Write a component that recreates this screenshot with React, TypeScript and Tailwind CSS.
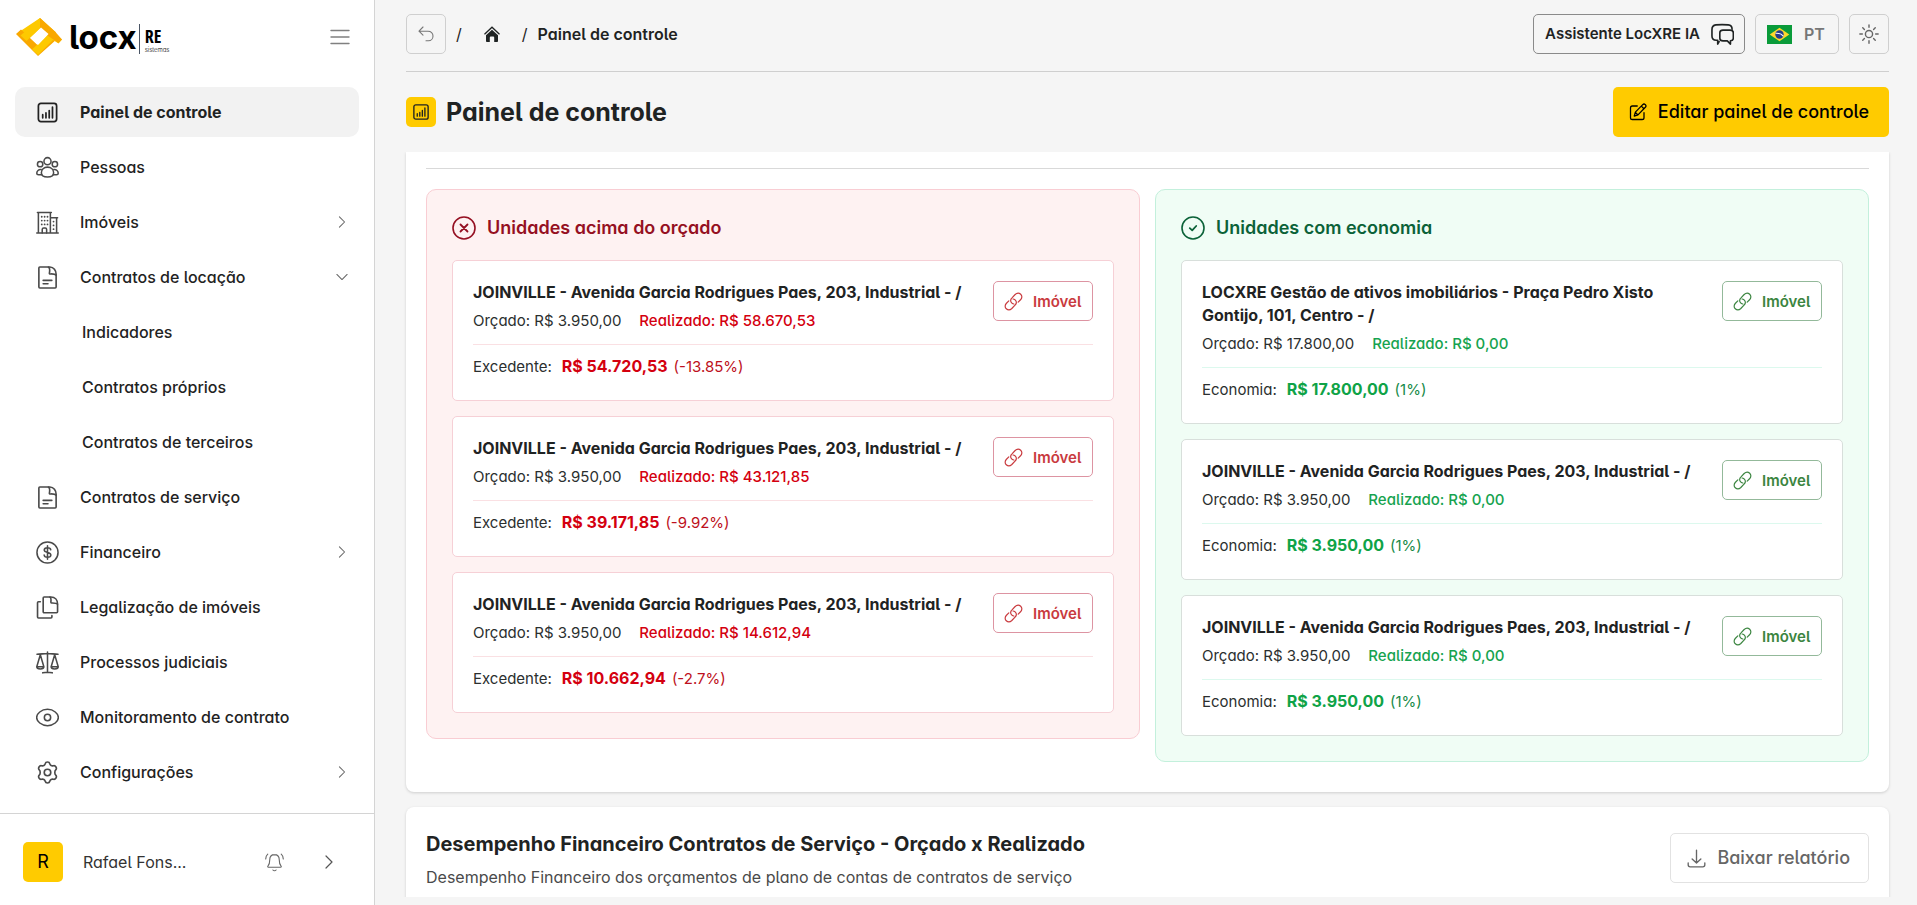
import type { ReactNode } from "react";

type IconProps = { className?: string };

function Svg({ className = "", box = 24, width = 1.6, children }: IconProps & { box?: number; width?: number; children: ReactNode }) {
  return (
    <svg
      aria-hidden="true"
      className={`shrink-0 ${className}`}
      viewBox={`0 0 ${box} ${box}`}
      fill="none"
      stroke="currentColor"
      strokeWidth={width}
      strokeLinecap="round"
      strokeLinejoin="round"
    >
      {children}
    </svg>
  );
}

const ChartIcon = ({ className }: IconProps) => (
  <Svg className={className} width={1.8}>
    <rect x="2.5" y="2.5" width="19" height="19" rx="2.6" />
    <path d="M7 17.5v-3.2M10.4 17.5v-5M13.8 17.5V10M17.2 17.5V6.5" />
  </Svg>
);

const PeopleIcon = ({ className }: IconProps) => (
  <Svg className={className} width={1.6}>
    <circle cx="12" cy="5.4" r="3.7" />
    <circle cx="4.3" cy="8.5" r="2.8" />
    <circle cx="19.7" cy="8.5" r="2.8" />
    <path d="M12 11.6c-3.8 0-6.4 2.6-6.4 5.9 0 3.2 2.9 4.5 6.4 4.5s6.4-1.3 6.4-4.5c0-3.3-2.6-5.900-6.400-5.900z" />
    <path d="M5.4 14.2c-2.700-.3-4.600 1.500-4.600 3.700 0 1.100.8 1.600 1.800 1.600h3.300M18.600 14.200c2.700-.3 4.600 1.500 4.600 3.700 0 1.100-.8 1.600-1.800 1.600h-3.300" />
  </Svg>
);

const BuildingIcon = ({ className }: IconProps) => (
  <Svg className={className} width={1.6}>
    <path d="M.8 23h22.4M2.5 23V1.5M15 1.5V23M1.5 1.5h14.500M15 7h7.500M21.500 7v16" />
    <path d="M6.5 23v-3.800c0-.9.600-1.500 1.500-1.500h1.600c.9 0 1.500.6 1.500 1.500V23" />
    <path d="M6 6h.01M9 6h.01M12 6h.01M6 10h.01M9 10h.01M12 10h.01M6 14h.01M9 14h.01M12 14h.01M18.300 11h.01M18.300 15h.01M18.300 19h.01" strokeWidth="1.9" />
  </Svg>
);

const FileIcon = ({ className }: IconProps) => (
  <Svg className={className} width={1.7}>
    <path d="M4 1h10.500c4 0 6.500 4 6.500 7.500V22c0 .6-.4 1-1 1H4c-.6 0-1-.4-1-1V2c0-.6.4-1 1-1z" />
    <path d="M13 1.200c1.600.8 1.300 4.500 1 6.200-.1.500.2.900.7.900 2 0 5-.3 6 1.200" />
    <path d="M7.500 15h9M7.500 18.500h5" />
  </Svg>
);

const CoinIcon = ({ className }: IconProps) => (
  <Svg className={className} width={1.6}>
    <circle cx="12" cy="12" r="11" />
    <path d="M15.400 9.200C15.200 7.800 13.900 7 12 7c-2 0-3.400.9-3.400 2.400 0 3.400 6.900 1.700 6.900 5.200 0 1.500-1.500 2.400-3.500 2.400s-3.400-.9-3.500-2.400M12 5v14" />
  </Svg>
);

const CopyIcon = ({ className }: IconProps) => (
  <Svg className={className} width={1.7}>
    <path d="M8.500 1h7c4.500 0 7 3.500 7 7.500v8c0 .6-.4 1-1 1h-13c-.6 0-1-.4-1-1V2c0-.6.4-1 1-1z" />
    <path d="M14.500 1.200c1.500.8 1.200 3.800 1 5.300-.1.500.2.800.7.800 2 0 5.300-.2 6.200 1.200" />
    <path d="M4.500 6H2.600c-.6 0-1 .4-1 1v15c0 .6.4 1 1 1h13c.6 0 1-.4 1-1v-1.500" />
  </Svg>
);

const ScaleIcon = ({ className }: IconProps) => (
  <Svg className={className} width={1.6}>
    <path d="M1 3.300c3.500 0 7.500-.6 11-.6s7.500.6 11 .6M12 1v21.500M7 22.800c3-.7 7-.7 10 0" />
    <path d="M4.500 4l-3.700 12.500M4.500 4l3.700 12.500M.8 16.500c0 2.900 7.400 2.900 7.400 0zM19.500 4l-3.700 12.500M19.500 4l3.700 12.500M15.800 16.500c0 2.900 7.400 2.900 7.400 0z" />
  </Svg>
);

const EyeIcon = ({ className }: IconProps) => (
  <Svg className={className} width={1.6}>
    <path d="M12 3.500c6.500 0 11.300 4.500 11.300 8.500S18.500 20.500 12 20.500.7 16 .7 12 5.500 3.500 12 3.500z" />
    <circle cx="12" cy="12" r="3.3" />
  </Svg>
);

const GearIcon = ({ className }: IconProps) => (
  <Svg className={className} width={1.7}>
    <path d="M9.600 2.900c.5-2.400 4.300-2.400 4.800 0 .4 1.700 2 2.600 3.700 2.100 2.300-.7 4.200 2.600 2.500 4.200-1.300 1.200-1.300 4.400 0 5.600 1.700 1.600-.2 4.900-2.500 4.200-1.700-.5-3.300.4-3.700 2.100-.5 2.400-4.300 2.400-4.800 0-.4-1.700-2-2.600-3.700-2.100-2.300.7-4.200-2.600-2.500-4.200 1.300-1.200 1.300-4.400 0-5.600C1.700 7.600 3.600 4.300 5.900 5c1.700.5 3.300-.4 3.700-2.100z" />
    <circle cx="12" cy="12" r="3.4" />
  </Svg>
);

const Chevron = ({ className, down = false }: IconProps & { down?: boolean }) => (
  <Svg className={className} box={14} width={1.2}>
    <path d={down ? "M1 4l6 6 6-6" : "M4 1l6 6-6 6"} />
  </Svg>
);

const LinkIcon = ({ className }: IconProps) => (
  <Svg className={className} width={1.5}>
    <path d="M12.500 15.200c-3-.3-5-3.500-3.600-6.200.3-.6.700-1.100 1.200-1.600l4-4.200c2.200-2.200 5-2.300 7-.4s1.900 4.900-.2 7l-3 3" />
    <path d="M11.500 8.800c3 .3 5 3.500 3.600 6.200-.3.6-.7 1.100-1.200 1.600l-4 4.200c-2.200 2.200-5 2.300-7 .4s-1.900-4.900.2-7l3-3" />
  </Svg>
);

const PencilIcon = ({ className }: IconProps) => (
  <Svg className={className} width={1.7}>
    <path d="M11 4H4.500C2.800 4 2 4.800 2 6.500v13C2 21.200 2.800 22 4.500 22h13c1.700 0 2.500-.8 2.500-2.500V13" />
    <path d="M18.300 2.200c1-1 2.500-.9 3.500 0 1 1 .9 2.500 0 3.500L12 15.800l-5 1.600 1.500-5.200zM16.500 4.200l3.400 3.400M8.500 12.500l3.200 3.200" />
  </Svg>
);

const ChatIcon = ({ className }: IconProps) => (
  <Svg className={className} width={1.7}>
    <path d="M8.500 19.500L7 22v-4H5.500c-2.700 0-4.500-1.500-4.500-4.500V7c0-3.500 1.300-4.700 4-5 4-.4 9-.4 13 0 2.700.3 4 1.500 4 4.500" />
    <path d="M12.500 7.500h7.500c2 0 3.300.6 3.300 2.700v5.600c0 2-1 2.700-3 2.700v3.500l-3.300-3.300h-4.500c-2.300 0-3.300-.7-3.300-2.700v-5.800c0-2.100 1.300-2.700 3.300-2.700z" />
  </Svg>
);

const SunIcon = ({ className }: IconProps) => (
  <Svg className={className} width={1.7}>
    <circle cx="12" cy="12" r="4.3" />
    <path d="M12 1v3M12 20v3M1 12h3M20 12h3M4.500 4.500l2 2M17.500 17.500l2 2M19.500 4.500l-2 2M6.500 17.500l-2 2" />
  </Svg>
);

const DownloadIcon = ({ className }: IconProps) => (
  <Svg className={className} width={1.7}>
    <path d="M12 1.500v16M6.500 12.500l5.500 5.300 5.500-5.300M1.500 17.500v2.500c0 1.600.9 2.500 2.500 2.500h16c1.600 0 2.500-.9 2.500-2.500v-2.500" />
  </Svg>
);

const BellIcon = ({ className }: IconProps) => (
  <Svg className={className} width={1.4}>
    <path d="M12 2c-3.800 0-6 2.800-6 6.500 0 4-.8 6.500-2.300 8-.6.700-.3 1.500.6 1.500h15.400c.9 0 1.200-.8.6-1.500-1.500-1.500-2.300-4-2.300-8C18 4.800 15.800 2 12 2zM10 21.500c1 1.300 3 1.300 4 0M3.500 1.500C1.800 3 1 5 .9 7.500M20.500 1.500c1.700 1.500 2.500 3.500 2.600 6" />
  </Svg>
);

const UndoIcon = ({ className }: IconProps) => (
  <Svg className={className} box={16} width={1.1}>
    <path d="M5 1L1 5.200l4 4M1 5.200h9c3 0 5 2 5 4.700S13 14.800 10.500 14.800H8" />
  </Svg>
);

const HomeIcon = ({ className }: IconProps) => (
  <svg aria-hidden="true" viewBox="0 0 16 16" className={className} fill="currentColor">
    <path d="M8 3.700L2 9.300V15c0 .5.300.9.800.9h3V11.500c0-.5.4-.9.900-.9h2.600c.5 0 .9.400.9.900v4.400h3c.5 0 .8-.4.800-.9V9.300z" />
    <path d="M.8 7.900L8 1.200l7.200 6.700" fill="none" stroke="currentColor" strokeWidth="1.3" strokeLinecap="round" />
  </svg>
);

const BrazilFlag = ({ className }: IconProps) => (
  <svg aria-hidden="true" viewBox="0 0 25 19" className={className}>
    <path fill="#0a9b3a" d="M0 0h25v19H0z" />
    <path fill="#fdd72b" d="M12.500 2.700L22.300 9.500l-9.800 6.800L2.700 9.500z" />
    <circle cx="12.5" cy="9.5" r="4.2" fill="#263c8c" />
    <path d="M8.600 8.300c3-.3 5.900.6 7.700 2.900" fill="none" stroke="#fff" strokeWidth="1.1" />
  </svg>
);

function Logo() {
  return (
    <a href="#inicio" aria-label="locx RE sistemas" className="flex items-center text-black">
      <svg aria-hidden="true" viewBox="0 0 46 38" className="h-[38px] w-[46px]">
        <path fill="#fdc900" d="M24 0L40 14.500 34 20 24 10.500 11 22.500 3 14z" />
        <path fill="#f9a800" d="M24 0l10 9-4 7.500-6-6zM0 16l5-4.500 17 16 13-12 6 5.500L22 38z" />
        <path fill="#fdc900" d="M24 0L4.500 17.500l6 5.500L24 10.500zM35 13.500l11 8-3.500 4-5.500-3.500-15 15-6-5.500z" />
        <path fill="#f9a800" d="M34 9l5 4.500 7 8-3.500 3.500L30 16.500z" />
        <path fill="#fff" d="M25 9.500l7.500 6.500L22 27l-7.500-7z" />
      </svg>
      <span className="ml-[7px] text-[33px] leading-[38px] font-bold">locx</span>
      <span className="mt-1 ml-[2px] flex h-[30px] flex-col border-l border-gray-600 pt-[3px] pl-[5px]">
        <span className="font-['Open_Sans_Condensed','Roboto_Condensed','Noto_Sans_Condensed','Liberation_Sans_Narrow','Roboto',sans-serif] text-[18px] leading-[19px] font-bold">
          RE
        </span>
        <span className="text-[6px] leading-[8px] font-light">sistemas</span>
      </span>
    </a>
  );
}

type NavEntry = {
  label: string;
  icon?: (p: IconProps) => ReactNode;
  active?: boolean;
  chevron?: "right" | "down";
};

const nav: NavEntry[] = [
  { label: "Painel de controle", icon: ChartIcon, active: true },
  { label: "Pessoas", icon: PeopleIcon },
  { label: "Imóveis", icon: BuildingIcon, chevron: "right" },
  { label: "Contratos de locação", icon: FileIcon, chevron: "down" },
  { label: "Indicadores" },
  { label: "Contratos próprios" },
  { label: "Contratos de terceiros" },
  { label: "Contratos de serviço", icon: FileIcon },
  { label: "Financeiro", icon: CoinIcon, chevron: "right" },
  { label: "Legalização de imóveis", icon: CopyIcon },
  { label: "Processos judiciais", icon: ScaleIcon },
  { label: "Monitoramento de contrato", icon: EyeIcon },
  { label: "Configurações", icon: GearIcon, chevron: "right" },
];

function Sidebar() {
  return (
    <aside className="flex w-[375px] shrink-0 flex-col border-r border-[#d4d4d4] bg-white">
      <div className="flex items-center justify-between pt-[18px] pr-6 pb-[31px] pl-4">
        <Logo />
        <button type="button" aria-label="Recolher menu" className="text-[#808080]">
          <Svg className="size-5" box={20} width={1.4}>
            <path d="M1 3.500h18M1 10h18M1 16.500h18" />
          </Svg>
        </button>
      </div>
      <nav className="flex min-h-0 flex-1 flex-col gap-[5px] overflow-hidden px-[15px]">
        {nav.map(({ label, icon: Icon, active, chevron }) => (
          <a
            key={label}
            href="#"
            aria-current={active ? "page" : undefined}
            className={`flex h-[50px] shrink-0 items-center rounded-[10px] pr-[11px] text-base text-[#1f2323] ${
              Icon ? "pl-[21px]" : "pl-[67px]"
            } ${active ? "bg-[#f2f2f2] font-bold" : "font-medium"}`}
          >
            {Icon && <Icon className={`mr-[21px] size-[23px] ${active ? "text-[#222]" : "text-[#4a4a4a]"}`} />}
            <span className="flex-1">{label}</span>
            {chevron && <Chevron down={chevron === "down"} className="size-3 text-[#666]" />}
          </a>
        ))}
      </nav>
      <div className="flex items-center border-t border-[#d4d4d4] px-[23px] pt-7 pb-[23px]">
        <span className="flex size-10 items-center justify-center rounded-[5px] bg-[#ffcb00] text-lg text-black">R</span>
        <span className="ml-5 flex-1 text-base text-[#333]">Rafael Fons...</span>
        <button type="button" aria-label="Notificações" className="mr-[38px] text-[#666]">
          <BellIcon className="size-[19px]" />
        </button>
        <button type="button" aria-label="Abrir perfil" className="mr-[15px] text-[#555]">
          <Chevron className="size-[14px]" />
        </button>
      </div>
    </aside>
  );
}

function Header() {
  return (
    <header className="flex items-center justify-between border-b border-[#cfcfcf] pt-[14px] pb-[17px]">
      <div className="flex items-center text-base text-[#1f2323]">
        <button type="button" aria-label="Voltar" className="flex size-10 items-center justify-center rounded-[5px] border border-[#cfcfcf] text-[#777]">
          <UndoIcon className="size-4" />
        </button>
        <span className="ml-[10px]">/</span>
        <a href="#inicio" aria-label="Início" className="ml-[22px]">
          <HomeIcon className="size-4" />
        </a>
        <span className="ml-[22px]">/</span>
        <span className="ml-[10px] font-semibold">Painel de controle</span>
      </div>
      <div className="flex items-center gap-[10px]">
        <button type="button" className="flex h-10 items-center gap-[11px] rounded-[5px] border border-[#8a8a8a] pr-[10px] pl-[11px] text-[15px] font-semibold text-[#1f2323]">
          Assistente LocXRE IA
          <ChatIcon className="size-[23px]" />
        </button>
        <button type="button" className="flex h-10 w-[84px] items-center gap-3 rounded-[5px] border border-[#cfcfcf] pl-[11px] text-base font-semibold text-[#777]">
          <BrazilFlag className="h-[19px] w-[25px]" />
          PT
        </button>
        <button type="button" aria-label="Alternar tema" className="flex size-10 items-center justify-center rounded-[5px] border border-[#cfcfcf] text-[#666]">
          <SunIcon className="size-5" />
        </button>
      </div>
    </header>
  );
}

type Tone = "red" | "green";
type Unit = { name: string; budget: string; actual: string; diff: string; percent: string };

const joinville = "JOINVILLE - Avenida Garcia Rodrigues Paes, 203, Industrial - /";

const over: Unit[] = [
  { name: joinville, budget: "R$ 3.950,00", actual: "R$ 58.670,53", diff: "R$ 54.720,53", percent: "(-13.85%)" },
  { name: joinville, budget: "R$ 3.950,00", actual: "R$ 43.121,85", diff: "R$ 39.171,85", percent: "(-9.92%)" },
  { name: joinville, budget: "R$ 3.950,00", actual: "R$ 14.612,94", diff: "R$ 10.662,94", percent: "(-2.7%)" },
];

const under: Unit[] = [
  {
    name: "LOCXRE Gestão de ativos imobiliários - Praça Pedro Xisto Gontijo, 101, Centro - /",
    budget: "R$ 17.800,00",
    actual: "R$ 0,00",
    diff: "R$ 17.800,00",
    percent: "(1%)",
  },
  { name: joinville, budget: "R$ 3.950,00", actual: "R$ 0,00", diff: "R$ 3.950,00", percent: "(1%)" },
  { name: joinville, budget: "R$ 3.950,00", actual: "R$ 0,00", diff: "R$ 3.950,00", percent: "(1%)" },
];

const tones = {
  red: {
    panel: "border-[#f9cdd3] bg-[#fef2f2]",
    title: "text-[#951022]",
    card: "border-[#f6d0d6]",
    line: "border-[#fae0e3]",
    actual: "text-[#d4000f]",
    diff: "text-[#d4000f]",
    percent: "text-[#bd1020]",
    button: "border-[#dd94a2] text-[#c93a3e]",
  },
  green: {
    panel: "border-[#c3f0dc] bg-[#f0fdf5]",
    title: "text-[#0b6238]",
    card: "border-[#d8dfdb]",
    line: "border-[#dcf9ee]",
    actual: "text-[#16a34f]",
    diff: "text-[#0fa347]",
    percent: "text-[#178a48]",
    button: "border-[#93b99a] text-[#3b8540]",
  },
};

function UnitCard({ unit, tone, diffLabel }: { unit: Unit; tone: Tone; diffLabel: string }) {
  const t = tones[tone];
  return (
    <li className={`rounded-[5px] border bg-white px-5 pt-5 pb-[22px] text-[15px] leading-[23px] text-[#2b2f2f] ${t.card}`}>
      <div className={`flex items-start justify-between gap-5 border-b pb-3 ${t.line}`}>
        <div>
          <h3 className="text-base leading-[23px] font-bold text-[#1f2323]">{unit.name}</h3>
          <p className="mt-[5px] flex gap-[18px]">
            <span>Orçado: {unit.budget}</span>
            <span className={`font-medium ${t.actual}`}>Realizado: {unit.actual}</span>
          </p>
        </div>
        <a href="#imovel" className={`flex h-10 w-[100px] shrink-0 items-center gap-[10px] rounded-[5px] border pl-[10px] text-[15px] font-semibold ${t.button}`}>
          <LinkIcon className="size-[19px]" />
          Imóvel
        </a>
      </div>
      <p className="flex items-center pt-[10px]">
        <span>{diffLabel}:</span>
        <strong className={`ml-[10px] text-base leading-[23px] font-bold ${t.diff}`}>{unit.diff}</strong>
        <span className={`ml-[6px] ${t.percent}`}>{unit.percent}</span>
      </p>
    </li>
  );
}

function UnitPanel({ title, tone, units, diffLabel }: { title: string; tone: Tone; units: Unit[]; diffLabel: string }) {
  const t = tones[tone];
  return (
    <section className={`rounded-[10px] border p-[25px] ${t.panel}`}>
      <h2 className={`mb-5 flex h-[25px] items-center gap-[11px] text-lg font-semibold ${t.title}`}>
        <Svg className="size-6" width={1.6}>
          <circle cx="12" cy="12" r="11" />
          <path d={tone === "red" ? "M8.500 8.500l7 7M15.500 8.500l-7 7" : "M8.800 12.200l2.400 2.200 4-4.400"} strokeWidth="1.8" />
        </Svg>
        {title}
      </h2>
      <ul className="flex flex-col gap-[15px]">
        {units.map((unit, i) => (
          <UnitCard key={i} unit={unit} tone={tone} diffLabel={diffLabel} />
        ))}
      </ul>
    </section>
  );
}

export default function App() {
  return (
    <div className="flex h-screen bg-[#f5f5f5] font-['Inter',sans-serif] [font-feature-settings:'cv11','cv05']">
      <Sidebar />
      <main className="flex min-w-0 flex-1 flex-col pr-7 pb-2 pl-[31px]">
        <Header />
        <div className="flex items-center justify-between py-[15px]">
          <div className="flex items-center gap-[10px]">
            <span className="flex size-[30px] items-center justify-center rounded-[5px] bg-[#ffcb00] text-[#1f2323]">
              <ChartIcon className="size-[18px]" />
            </span>
            <h1 className="text-[25px] leading-[30px] font-bold text-[#1f2323]">Painel de controle</h1>
          </div>
          <button type="button" className="flex h-[50px] items-center gap-[11px] rounded-[5px] bg-[#ffcb00] pr-5 pl-4 text-lg font-medium text-black">
            <PencilIcon className="size-[18px]" />
            Editar painel de controle
          </button>
        </div>
        <div className="-mx-1 flex min-h-0 flex-1 flex-col gap-[15px] overflow-hidden px-1">
          <section className="shrink-0 rounded-b-lg bg-white px-5 pt-4 pb-[30px] shadow-[0_1px_3px_rgba(0,0,0,0.16)]">
            <hr className="mb-5 border-[#d9d9d9]" />
            <div className="grid grid-cols-2 items-start gap-[15px]">
              <UnitPanel title="Unidades acima do orçado" tone="red" units={over} diffLabel="Excedente" />
              <UnitPanel title="Unidades com economia" tone="green" units={under} diffLabel="Economia" />
            </div>
          </section>
          <section className="flex shrink-0 items-start justify-between rounded-t-lg bg-white px-5 pt-[22px] pb-10 shadow-[0_1px_3px_rgba(0,0,0,0.16)]">
            <div>
              <h2 className="text-xl leading-[30px] font-bold text-[#1f2323]">
                Desempenho Financeiro Contratos de Serviço - Orçado x Realizado
              </h2>
              <p className="mt-[6px] text-base text-[#4a4a4a]">Desempenho Financeiro dos orçamentos de plano de contas de contratos de serviço</p>
            </div>
            <button type="button" className="mt-1 flex h-[50px] items-center gap-[11px] rounded-[5px] border border-[#e2e2e2] pr-[18px] pl-4 text-lg font-medium text-[#666]">
              <DownloadIcon className="size-[19px]" />
              Baixar relatório
            </button>
          </section>
        </div>
      </main>
    </div>
  );
}
